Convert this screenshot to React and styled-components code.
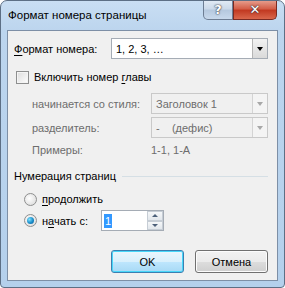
import React from 'react'
import styled, { createGlobalStyle } from 'styled-components'

const Global = createGlobalStyle`
  html, body { margin: 0; padding: 0; background: #fff; }
  body { font-family: 'Liberation Sans', Arial, sans-serif; font-size: 11px; color: #000; }
`

const Frame = styled.div`
  width: 285px;
  height: 288px;
  box-sizing: border-box;
  border: 1px solid #5d6f85;
  border-radius: 7px 7px 4px 4px;
  background: linear-gradient(180deg, #c9def3 0px, #bcd5ee 30px, #b4d0ec 100%);
  display: flex;
  flex-direction: column;
  overflow: hidden;
`

const TitleBar = styled.div`
  height: 29px;
  display: flex;
  align-items: flex-start;
  justify-content: space-between;
  padding-left: 7px;
`

const Title = styled.div`
  padding-top: 8px;
  font-size: 11.5px;
  color: #000;
`

const Caption = styled.div`
  display: flex;
  margin-right: 7px;
  margin-top: -1px;
`

const CapButton = styled.div`
  width: ${p => p.w}px;
  height: 20px;
  box-sizing: border-box;
  border: 1px solid ${p => (p.close ? '#7a2a22' : '#6d7d93')};
  border-top: none;
  border-radius: ${p => (p.close ? '0 0 5px 0' : '0 0 0 5px')};
  background: ${p => (p.close
    ? 'linear-gradient(180deg, #e8a393 0%, #d4604a 45%, #c23a22 55%, #d9674c 100%)'
    : 'linear-gradient(180deg, #e3ecf6 0%, #ccdaea 45%, #b6c9df 55%, #c8d9ec 100%)')};
  display: flex;
  align-items: center;
  justify-content: center;
  color: #fff;
  font-weight: bold;
  font-family: 'DejaVu Sans', sans-serif;
  font-size: 13px;
  text-shadow: 0 0 2px #334, 0 0 1px #222;
`

const Client = styled.div`
  flex: 1;
  margin: 0 6px 6px 6px;
  border: 1px solid #7d8fa6;
  background: #f0f0f0;
  display: flex;
  flex-direction: column;
  padding: 6px 9px 0 6px;
`

const Row = styled.div`
  display: flex;
  align-items: center;
  height: ${p => p.h || 20}px;
  margin-top: ${p => p.mt || 0}px;
  padding-left: ${p => p.indent || 0}px;
`

const Label = styled.span`
  color: ${p => (p.disabled ? '#6d6d6d' : '#000')};
  width: ${p => (p.w ? p.w + 'px' : 'auto')};
  flex: none;
  white-space: nowrap;
`

const Combo = styled.div`
  flex: 1;
  height: 21px;
  box-sizing: border-box;
  border: 1px solid ${p => (p.disabled ? '#c9c9c9' : '#a5acb5')};
  background: ${p => (p.disabled ? '#f0f0f0' : '#fff')};
  display: flex;
  align-items: center;
  padding-left: 4px;
  color: ${p => (p.disabled ? '#6d6d6d' : '#000')};
`

const ComboText = styled.span`
  flex: 1;
  white-space: pre;
`

const Arrow = styled.div`
  width: 15px;
  height: 19px;
  box-sizing: border-box;
  border-left: 1px solid ${p => (p.disabled ? '#d4d4d4' : '#b5b5b5')};
  background: ${p => (p.disabled ? '#f4f4f4' : 'linear-gradient(180deg, #f2f2f2, #dadada)')};
  display: flex;
  align-items: center;
  justify-content: center;
  &::after {
    content: '';
    border-left: 3.5px solid transparent;
    border-right: 3.5px solid transparent;
    border-top: 4px solid ${p => (p.disabled ? '#a8a8a8' : '#000')};
  }
`

const Check = styled.div`
  width: 13px;
  height: 13px;
  box-sizing: border-box;
  border: 1px solid #8e8f8f;
  background: linear-gradient(135deg, #dcdcdc, #fefefe);
  box-shadow: inset 0 0 0 1px #f4f4f4;
  margin-right: 5px;
  flex: none;
`

const Radio = styled.div`
  width: 13px;
  height: 13px;
  box-sizing: border-box;
  border-radius: 50%;
  border: 1px solid #8e8f8f;
  background: radial-gradient(circle at 40% 40%, #fff, #d6d6d6);
  margin-right: 5px;
  flex: none;
  display: flex;
  align-items: center;
  justify-content: center;
  &::after {
    content: '';
    display: ${p => (p.on ? 'block' : 'none')};
    width: 7px;
    height: 7px;
    border-radius: 50%;
    background: radial-gradient(circle at 35% 35%, #7fe3ff, #1a8cc9 55%, #0b5e95);
  }
`

const GroupHead = styled.div`
  display: flex;
  align-items: center;
  height: 16px;
  margin-top: 8px;
  &::after {
    content: '';
    flex: 1;
    height: 1px;
    margin-left: 6px;
    background: #d5dfe5;
  }
`

const Spin = styled.div`
  width: 63px;
  height: 21px;
  box-sizing: border-box;
  border: 1px solid #a5acb5;
  background: #fff;
  display: flex;
  align-items: center;
`

const SpinText = styled.div`
  flex: 1;
  padding-left: 2px;
  & span {
    background: #3399ff;
    color: #fff;
    padding: 1px 1px;
  }
`

const SpinButtons = styled.div`
  width: 16px;
  height: 19px;
  display: flex;
  flex-direction: column;
`

const SpinBtn = styled.div`
  flex: 1;
  box-sizing: border-box;
  border: 1px solid #c6cdd5;
  background: linear-gradient(180deg, #f5f7f9, #e2e7ec);
  display: flex;
  align-items: center;
  justify-content: center;
  &::after {
    content: '';
    border-left: 3px solid transparent;
    border-right: 3px solid transparent;
    ${p => (p.up ? 'border-bottom: 3px solid #4c607a;' : 'border-top: 3px solid #4c607a;')}
  }
`

const Footer = styled.div`
  display: flex;
  justify-content: flex-end;
  gap: 11px;
  margin-top: auto;
  padding-bottom: 7px;
`

const Button = styled.div`
  width: 73px;
  height: 23px;
  box-sizing: border-box;
  border: 1px solid ${p => (p.primary ? '#3c7fb1' : '#707070')};
  border-radius: 3px;
  background: ${p => (p.primary
    ? 'linear-gradient(180deg, #eaf6fd 0%, #d9f0fc 50%, #bee6fd 51%, #a7d9f5 100%)'
    : 'linear-gradient(180deg, #f2f2f2 0%, #ebebeb 50%, #dddddd 51%, #cfcfcf 100%)')};
  box-shadow: ${p => (p.primary ? 'inset 0 0 0 1px #48d7f9' : 'inset 0 0 0 1px #fcfcfc')};
  display: flex;
  align-items: center;
  justify-content: center;
`

const U = styled.u`
  text-decoration-thickness: 1px;
  text-underline-offset: 2px;
`

export default function App() {
  return (
    <>
      <Global />
      <Frame>
        <TitleBar>
          <Title>Формат номера страницы</Title>
          <Caption>
            <CapButton w={30}>?</CapButton>
            <CapButton w={44} close>✕</CapButton>
          </Caption>
        </TitleBar>
        <Client>
          <Row h={21} mt={1}>
            <Label w={97}><U>Ф</U>ормат номера:</Label>
            <Combo>
              <ComboText>1, 2, 3, …</ComboText>
              <Arrow />
            </Combo>
          </Row>
          <Row mt={8} indent={2}>
            <Check />
            <Label>Включить номер <U>г</U>лавы</Label>
          </Row>
          <Row mt={6} h={21} indent={18}>
            <Label w={119} disabled>начинается со стиля:</Label>
            <Combo disabled>
              <ComboText>Заголовок 1</ComboText>
              <Arrow disabled />
            </Combo>
          </Row>
          <Row mt={3} h={21} indent={18}>
            <Label w={119} disabled>разделитель:</Label>
            <Combo disabled>
              <ComboText>-    (дефис)</ComboText>
              <Arrow disabled />
            </Combo>
          </Row>
          <Row mt={2} h={20} indent={18}>
            <Label w={119} disabled>Примеры:</Label>
            <Label disabled>1-1, 1-A</Label>
          </Row>
          <GroupHead>Нумерация страниц</GroupHead>
          <Row mt={5} indent={10}>
            <Radio />
            <Label><U>п</U>родолжить</Label>
          </Row>
          <Row mt={1} h={21} indent={10}>
            <Radio on />
            <Label w={59}>н<U>а</U>чать с:</Label>
            <Spin>
              <SpinText><span>1</span></SpinText>
              <SpinButtons>
                <SpinBtn up />
                <SpinBtn />
              </SpinButtons>
            </Spin>
          </Row>
          <Footer>
            <Button primary>OK</Button>
            <Button>Отмена</Button>
          </Footer>
        </Client>
      </Frame>
    </>
  )
}
